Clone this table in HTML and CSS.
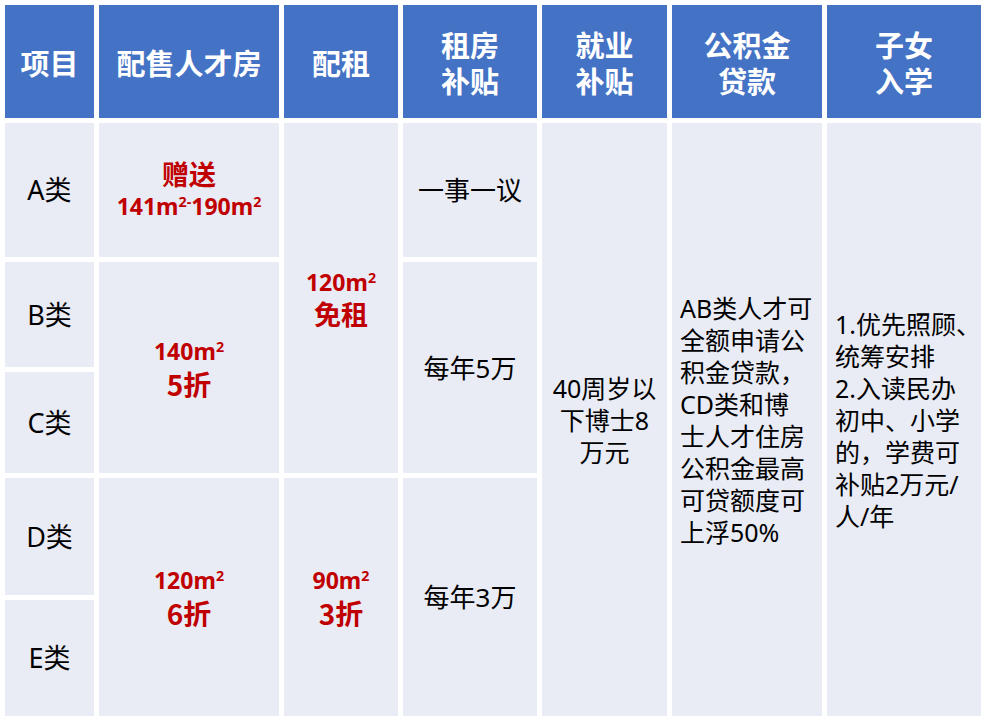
FILE: index.html
```html
<!DOCTYPE html>
<html lang="zh-CN">
<head>
<meta charset="utf-8">
<title>人才政策</title>
<link rel="stylesheet" href="styles.css">
</head>
<body>
<div class="table">
  <div class="cell head">项目</div>
  <div class="cell head">配售人才房</div>
  <div class="cell head">配租</div>
  <div class="cell head">租房<br>补贴</div>
  <div class="cell head">就业<br>补贴</div>
  <div class="cell head">公积金<br>贷款</div>
  <div class="cell head">子女<br>入学</div>

  <div class="cell body cat a1">A类</div>
  <div class="cell body cat b1">B类</div>
  <div class="cell body cat c1">C类</div>
  <div class="cell body cat d1">D类</div>
  <div class="cell body cat e1">E类</div>

  <div class="cell body red a2">
    <span class="big">赠送</span>
    <span class="num">141m<sup>2-</sup>190m<sup>2</sup></span>
  </div>
  <div class="cell body red bc2">
    <span class="num">140m<sup>2</sup></span>
    <span class="big lg">5折</span>
  </div>
  <div class="cell body red de2">
    <span class="num">120m<sup>2</sup></span>
    <span class="big lg">6折</span>
  </div>

  <div class="cell body red ac3">
    <span class="num">120m<sup>2</sup></span>
    <span class="big">免租</span>
  </div>
  <div class="cell body red de3">
    <span class="num">90m<sup>2</sup></span>
    <span class="big lg">3折</span>
  </div>

  <div class="cell body plain a4">一事一议</div>
  <div class="cell body plain bc4">每年5万</div>
  <div class="cell body plain de4">每年3万</div>

  <div class="cell body text col5">40周岁以<br>下博士8<br>万元</div>
  <div class="cell body text left col6">AB类人才可<br>全额申请公<br>积金贷款，<br>CD类和博<br>士人才住房<br>公积金最高<br>可贷额度可<br>上浮50%</div>
  <div class="cell body text left col7">1.优先照顾、<br>统筹安排<br>2.入读民办<br>初中、小学<br>的，学费可<br>补贴2万元/<br>人/年</div>
</div>
</body>
</html>
```

FILE: styles.css
```css
html, body {
  margin: 0;
  padding: 0;
  background: #ffffff;
}

body {
  width: 988px;
  height: 721px;
  overflow: hidden;
  font-family: "Noto Sans", "Noto Sans CJK SC", sans-serif;
}

.table {
  display: grid;
  padding: 5px 0 0 5px;
  grid-template-columns: 89px 180px 114px 134px 125px 150px 154px;
  grid-template-rows: 113px 134px 105px 101px 117px 116px;
  gap: 5px;
  grid-template-areas:
    "h1 h2 h3 h4 h5 h6 h7"
    "a1 a2 ac3 a4 c5 c6 c7"
    "b1 bc2 ac3 bc4 c5 c6 c7"
    "c1 bc2 ac3 bc4 c5 c6 c7"
    "d1 de2 de3 de4 c5 c6 c7"
    "e1 de2 de3 de4 c5 c6 c7";
}

.cell {
  display: flex;
  flex-direction: column;
  align-items: center;
  justify-content: center;
  text-align: center;
}

.head {
  background: #4472c4;
  color: #ffffff;
  font-family: "Noto Sans CJK SC", sans-serif;
  font-weight: 700;
  font-size: 29px;
  line-height: 36px;
}

.body {
  background: #e9ebf5;
  color: #000000;
}

.cat {
  font-size: 27px;
  line-height: 32px;
}

.a1 { grid-area: a1; }
.b1 { grid-area: b1; }
.c1 { grid-area: c1; }
.d1 { grid-area: d1; }
.e1 { grid-area: e1; }
.a2 { grid-area: a2; }
.bc2 { grid-area: bc2; }
.de2 { grid-area: de2; }
.ac3 { grid-area: ac3; }
.de3 { grid-area: de3; }
.a4 { grid-area: a4; }
.bc4 { grid-area: bc4; }
.de4 { grid-area: de4; }
.col5 { grid-area: c5; }
.col6 { grid-area: c6; }
.col7 { grid-area: c7; }

.red {
  color: #c00000;
  font-weight: 700;
}

.red .big {
  font-family: "Noto Sans CJK SC", sans-serif;
  font-size: 27px;
  line-height: 32px;
}

.red .big.lg {
  font-size: 28px;
  line-height: 34px;
}

.red .num {
  font-size: 23px;
  line-height: 32px;
}

.red sup {
  font-size: 0.62em;
  line-height: 0;
  vertical-align: 0.55em;
}

.plain {
  font-size: 26px;
  line-height: 32px;
}

.text {
  font-size: 25px;
  line-height: 32px;
}

.left {
  align-items: flex-start;
  text-align: left;
  padding-left: 8px;
}
```
